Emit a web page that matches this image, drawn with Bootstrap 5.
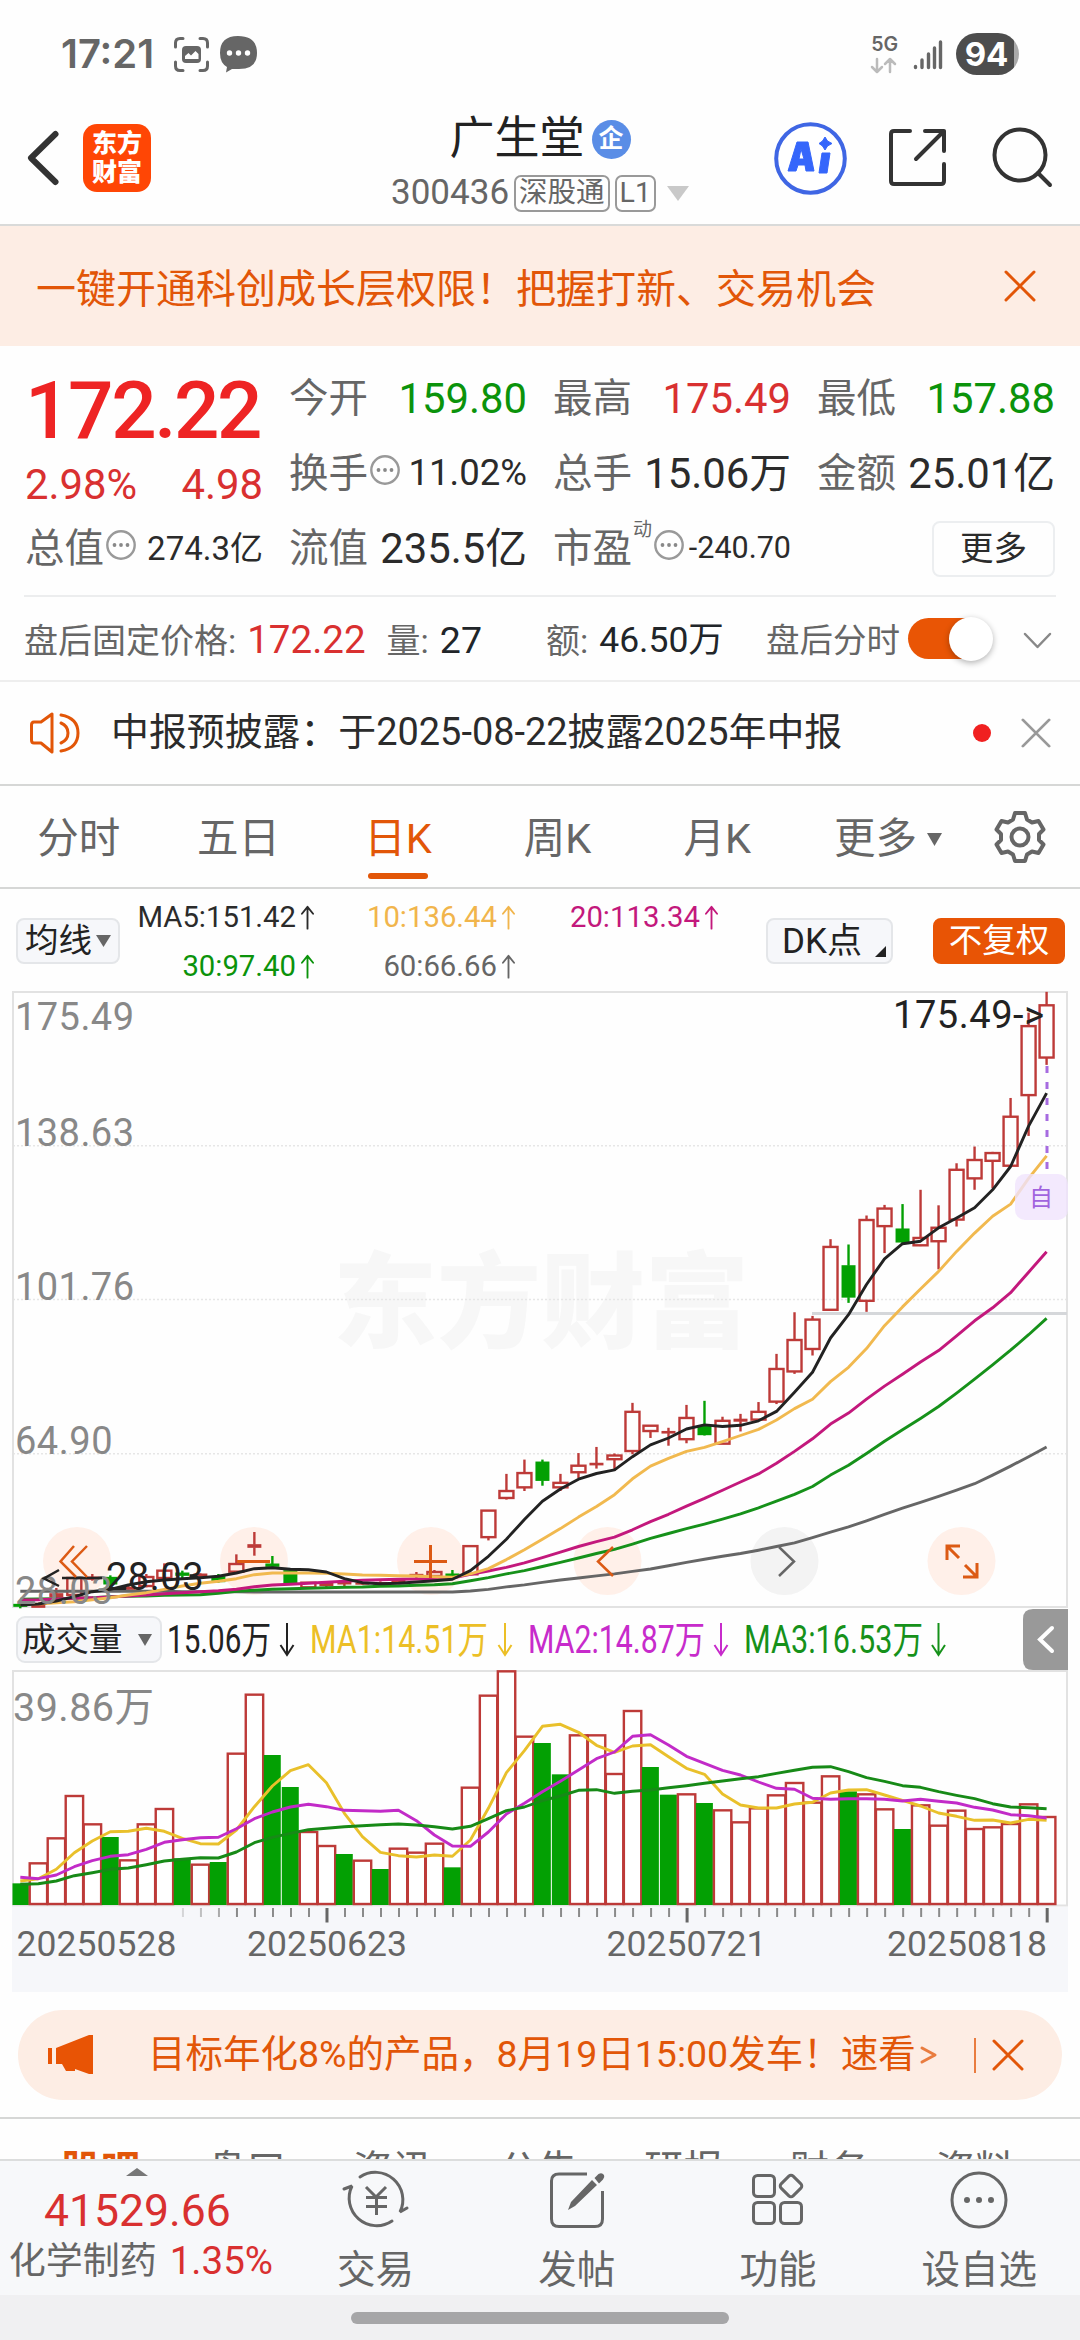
<!DOCTYPE html>
<html lang="zh-CN">
<head>
<meta charset="utf-8">
<meta name="viewport" content="width=device-width, initial-scale=1">
<title>广生堂 300436</title>
<link href="https://cdn.jsdelivr.net/npm/bootstrap@5.3.0/dist/css/bootstrap.min.css" rel="stylesheet">
<style>
:root{--or:#e25608;--rd:#d93030;--gn:#0b930b;--tx:#2b2b2b;--gy:#666;}
body{width:1080px;height:2340px;overflow:hidden;background:#fefefe;color:var(--tx);font-family:Roboto,"Noto Sans CJK SC",sans-serif;font-size:38px;line-height:1;white-space:nowrap}
svg{display:block;flex:none;overflow:visible}
.ln{fill:none;stroke:currentColor;stroke-linecap:round;stroke-linejoin:round}
.c-or{color:var(--or)}.c-rd{color:var(--rd)}.c-gn{color:var(--gn)}.c-gy{color:var(--gy)}
.status{height:108px;padding:0 61px 0 61px;color:#666;font-family:Inter,sans-serif;font-weight:600}
.status .time{font-size:40px;width:113px}
.pill{width:63px;height:42px;border-radius:21px;background:linear-gradient(90deg,#4d4d4d 58px,#aaa 58px);color:#fff;font-size:33px;font-weight:700;margin-left:14px;padding-right:2px}
.head{height:118px;border-bottom:2px solid #d9dad9;display:grid;grid-template-columns:1fr auto 1fr}
.logo{width:68px;height:68px;border-radius:14px;background:#ff4605;color:#fff;font-size:25px;font-weight:900;line-height:29px}
.name{font-size:45px;line-height:54px;color:#222;margin-top:4px}
.ent{width:39px;height:39px;border-radius:50%;background:#5a8de6;color:#fff;font-size:25px;font-weight:700;margin-left:7px}
.code{font-size:35px;line-height:38px;color:var(--gy);margin-top:8px}
.boxed{border:2px solid #999;border-radius:7px;height:37px;font-size:28.5px;padding:0 3px;line-height:31px;margin-left:5px}
.banner{height:120px;background:#fdede4;padding:7px 44px 0 36px;font-size:40px}
.stats{height:249px;padding:0 25px;display:grid;grid-template-columns:repeat(4,238px);column-gap:26px;align-content:start;padding-top:15px}
.stats .cell{height:75px;display:flex;align-items:center;justify-content:space-between}
.stats .lb{font-size:39.5px;color:var(--gy);display:flex;align-items:center}
.stats .lb svg{margin:0 0 8px 2px}
.stats .v{font-size:41.8px}.stats .s{font-size:36.5px}
.price{font-size:80px;font-weight:500;color:#ee2424;letter-spacing:-2.4px;height:100px;line-height:100px}
.more{width:123px;height:56px;border:2px solid #eceef0;border-radius:8px;font-size:33.5px}
.after{height:85px;margin:0 24px;border-top:2px solid #ecedee;font-size:34px;padding-top:4px}
.switch{width:85px;height:41px;position:relative;margin:-4px 30px 0 8px}
.switch i{position:absolute;left:0;top:0;width:80px;height:41px;border-radius:21px;background:#e95505}
.switch b{position:absolute;right:0;top:-1px;width:44px;height:44px;border-radius:50%;background:#fff;box-shadow:0 2px 6px rgba(0,0,0,.3)}
.notice{height:106px;border-top:2px solid #eee;border-bottom:2px solid #d6d7d6;font-size:37.9px;padding:0 29px 0 30px}
.ktabs{height:103px;border-bottom:2px solid #d6d7d6;font-size:41.5px;color:var(--gy)}
.ktabs>div{width:159.6px;position:relative;text-align:center;padding-top:5px;left:-1px}
.ktabs .on{color:var(--or)}
.ktabs .on:after{content:"";position:absolute;left:50%;margin-left:-30px;top:60px;width:60px;height:6px;border-radius:3px;background:var(--or)}
.marow{height:103px;padding:1px 15px 0 16px}
.chip{height:46px;border:2px solid #e4e6e9;border-radius:8px;background:#f6f7fa;font-size:33.5px;color:#222}
.mas{font-size:29.3px;display:grid;grid-template-columns:194px 201px 203px;row-gap:19px;justify-items:end;padding-top:2px}
.mas span{display:flex;align-items:center;gap:5px}
.adv{height:90px;margin:18px 18px 0;border-radius:45px;background:#fdede4;font-size:37.5px;padding:0 38px 0 30px}
.sub{height:42px;margin-top:17px;border-top:2px solid #d6d7d6;overflow:hidden;font-size:39.5px;color:var(--gy);padding:32px 30px 0 28px}
.sub div{width:145.7px;text-align:center}
.bnav{height:136px;border-top:2px solid #dcdddd;background:#f7f8fa;color:var(--gy)}
.bnav .idx{width:275px}
.bnav .it{width:201.5px;font-size:38.5px;padding-top:10px}
.bnav .it span{margin-top:22px}
.gest{height:45px;background:#f0f0f2;padding-top:17px}
.gest i{display:block;width:378px;height:12px;border-radius:6px;background:#a6a6a8;margin:auto}
</style>
<script src="https://cdn.jsdelivr.net/npm/bootstrap@5.3.0/dist/js/bootstrap.bundle.min.js"></script>
</head>
<body>
<svg width="0" height="0" class="position-absolute"><defs>
<symbol id="up" viewBox="0 0 14 26"><path class="ln" stroke-width="2" d="M7 25V2M1 9 7 1.5 13 9"/></symbol>
<symbol id="more3" viewBox="0 0 30 30"><circle cx="15" cy="15" r="13.7" fill="none" stroke="#999" stroke-width="2.4"/><g fill="#888"><circle cx="8.5" cy="15" r="1.9"/><circle cx="15" cy="15" r="1.9"/><circle cx="21.5" cy="15" r="1.9"/></g></symbol>
<symbol id="x" viewBox="0 0 32 32"><path class="ln" stroke-width="3" d="M2 2 30 30M30 2 2 30"/></symbol>
</defs></svg>

<div class="status d-flex align-items-center">
 <div class="time">17:21</div>
 <svg width="35" height="35" viewBox="0 0 35 35"><g class="ln" stroke-width="3"><path d="M1.5 10V6Q1.5 1.5 6 1.5H9M26 1.5H29Q33.5 1.5 33.5 6V10M33.5 25V29Q33.5 33.5 29 33.5H26M9 33.5H6Q1.5 33.5 1.5 29V25"/></g><rect x="8" y="9" width="19" height="17" rx="4" fill="#666"/><path d="M11 22V19L14.5 16 17 18.5 21.5 14 24.5 17V22Z" fill="#fff"/></svg>
 <svg class="ms-2 me-1" width="37" height="37" viewBox="-3 0 37 37"><path d="M18 0Q37 0 37 17 37 33 19 33H12L6 36.5 7 31Q0 27 0 17 0 0 18 0Z" fill="#666"/><g fill="#fff"><circle cx="9.5" cy="17" r="2.7"/><circle cx="18.500" cy="17" r="2.7"/><circle cx="27.5" cy="17" r="2.7"/></g></svg>
 <div class="ms-auto text-center" style="font-size:19.5px">5G
  <svg width="25" height="15" viewBox="0 0 25 15" class="mt-1" color="#bbb"><path class="ln" stroke-width="2.5" d="M6 1V13M1 9 6 14 11 9M19 14V2M14 6 19 1 24 6"/></svg></div>
 <svg class="ms-3" width="28" height="29" viewBox="0 0 28 29"><path class="ln" stroke-width="3.4" d="M1.500 26.500V27.500M8 20V27.5M14.500 14V27.5M20.500 8V27.5M26.500 2V27.500"/></svg>
 <div class="pill d-flex align-items-center justify-content-center">94</div>
</div>

<header class="head">
 <div class="d-flex align-items-center" style="padding:0 0 16px 27px">
  <svg width="32" height="54" viewBox="0 0 32 54" color="#333"><path class="ln" stroke-width="6" d="M28.5 3 4 27 28.5 51"/></svg>
  <div class="logo ms-4 d-flex flex-column align-items-center justify-content-center"><span>东方</span><span>财富</span></div>
 </div>
 <div>
  <div class="name d-flex justify-content-center align-items-center">广生堂<span class="ent d-flex align-items-center justify-content-center">企</span></div>
  <div class="code d-flex align-items-center">300436<span class="boxed">深股通</span><span class="boxed">L1</span><svg width="22" height="15" style="margin-left:11px"><path d="M0 0H22L11 15Z" fill="#c9c9c9"/></svg></div>
 </div>
 <div class="d-flex align-items-center justify-content-end" style="padding:0 28px 16px 0">
  <svg width="73" height="73" viewBox="0 0 73 73"><circle cx="36.5" cy="36.5" r="34.3" fill="#fff" stroke="#3f66e4" stroke-width="4"/><path fill="#3566fb" stroke="#3566fb" stroke-linejoin="round" fill-rule="evenodd" d="M23 20H34L40 49H32L31 43H24L22 49H14ZM27 27 25 37H30ZM48 31H56L53 51H45ZM51 15 53.500 19 58 21.5 53.500 24 51 28 48.500 24 45 21.5 48.500 19Z"/></svg>
  <svg width="58" height="58" viewBox="0 0 58 58" style="margin-left:42px" color="#333"><path class="ln" stroke-width="4" d="M21 2H5Q2 2 2 5V52Q2 55 5 55H52Q55 55 55 52V35M36 2H55V22M55 2 27 30"/></svg>
  <svg width="60" height="60" viewBox="0 0 60 60" style="margin-left:45px" color="#333"><g class="ln" stroke-width="4"><circle cx="28" cy="27" r="25.5"/><path d="M46 45 58 57"/></g></svg>
 </div>
</header>

<div class="banner c-or d-flex align-items-center justify-content-between"><span>一键开通科创成长层权限！把握打新、交易机会</span><svg width="32" height="32" style="margin-top:-8px"><use href="#x"/></svg></div>

<section class="stats">
 <div style="grid-row:span 2"><div class="price">172.22</div><div class="d-flex justify-content-between c-rd v" style="margin-top:3px"><span>2.98%</span><span>4.98</span></div></div>
 <div class="cell"><span class="lb">今开</span><span class="v c-gn">159.80</span></div>
 <div class="cell"><span class="lb">最高</span><span class="v c-rd">175.49</span></div>
 <div class="cell"><span class="lb">最低</span><span class="v c-gn">157.88</span></div>
 <div class="cell"><span class="lb">换手<svg width="30" height="30"><use href="#more3"/></svg></span><span class="s">11.02%</span></div>
 <div class="cell"><span class="lb">总手</span><span class="v">15.06万</span></div>
 <div class="cell"><span class="lb">金额</span><span class="v">25.01亿</span></div>
 <div class="cell"><span class="lb">总值<svg width="30" height="30"><use href="#more3"/></svg></span><span class="s" style="font-size:33px">274.3亿</span></div>
 <div class="cell"><span class="lb">流值</span><span class="v">235.5亿</span></div>
 <div class="cell"><span class="lb">市盈<small style="font-size:19px;margin:-38px 0 0 1px">动</small><svg width="30" height="30"><use href="#more3"/></svg></span><span class="s" style="font-size:30.5px">-240.70</span></div>
 <div class="cell justify-content-end"><span class="more d-flex align-items-center justify-content-center">更多</span></div>
</section>

<div class="after d-flex align-items-center c-gy">
 <span>盘后固定价格:</span><span class="c-rd" style="font-size:38.5px;margin-left:11px">172.22</span>
 <span style="margin-left:21px">量:</span><span class="text-dark" style="font-size:37.5px;margin-left:11px">27</span>
 <span style="margin-left:64px">额:</span><span class="text-dark" style="font-size:35.5px;margin-left:11px">46.50万</span>
 <span class="ms-auto" style="font-size:33.5px">盘后分时</span>
 <span class="switch"><i></i><b></b></span>
 <svg width="29" height="16" class="me-1" color="#888"><path class="ln" stroke-width="2.5" d="M2 1 14.5 14 27 1"/></svg>
</div>

<div class="notice d-flex align-items-center">
 <svg width="50" height="42" viewBox="0 0 50 42" class="c-or"><path class="ln" stroke-width="3" d="M22 2V40L11 31H4Q1.5 31 1.5 28V13Q1.5 10 4 10H11ZM31 11Q38 14 38 21 38 28 31 31M31 3Q48 6 48 21 48 36 31 39"/></svg>
 <span style="margin-left:31px">中报预披露：于2025-08-22披露2025年中报</span>
 <svg width="18" height="18" class="ms-auto"><circle cx="9" cy="9" r="9" fill="#f02020"/></svg>
 <svg width="30" height="30" style="margin-left:30px" color="#999"><use href="#x"/></svg>
</div>

<nav class="ktabs d-flex align-items-center">
 <div>分时</div><div>五日</div><div class="on">日K</div><div>周K</div><div>月K</div>
 <div class="d-flex align-items-center justify-content-center" style="width:182px">更多<svg width="15" height="13" style="margin-left:10px"><path d="M0 0H15L7.5 13Z" fill="#666"/></svg></div>
 <svg width="52" height="52" viewBox="-26 -26 52 52" style="margin-left:14px"><g class="ln" stroke-width="4"><path d="M-5 -24H5L7 -17.5 12 -14.5 18.5 -16 23.5 -7.5 19 -3V3L23.5 7.5 18.5 16 12 14.5 7 17.5 5 24H-5L-7 17.5-12 14.5-18.5 16-23.5 7.5-19 3V-3L-23.5-7.5-18.5-16-12-14.5-7-17.5Z"/><circle r="8.5"/></g></svg>
</nav>

<div class="marow d-flex align-items-center">
 <span class="chip d-flex align-items-center justify-content-center" style="width:104px">均线<svg width="15" height="12" class="ms-1"><path d="M0 0H15L7.5 12Z" fill="#666"/></svg></span>
 <div class="mas">
  <span>MA5:151.42<svg width="13" height="25"><use href="#up"/></svg></span>
  <span style="color:#f1b54c">10:136.44<svg width="13" height="25"><use href="#up"/></svg></span>
  <span style="color:#c3187c">20:113.34<svg width="13" height="25"><use href="#up"/></svg></span>
  <span class="c-gn">30:97.40<svg width="13" height="25"><use href="#up"/></svg></span>
  <span class="c-gy">60:66.66<svg width="13" height="25"><use href="#up"/></svg></span>
 </div>
 <span class="chip d-flex align-items-center" style="width:127px;margin-left:48px;padding-left:14px;font-size:35px">DK点<svg width="11" height="11" style="margin:20px 0 0 13px"><path d="M11 0V11H0Z" fill="#222"/></svg></span>
 <span class="chip d-flex align-items-center justify-content-center text-white ms-auto" style="width:132px;background:#e85405;border-color:#e85405">不复权</span>
</div>

<svg id="chart" width="1080" height="1000" viewBox="0 992 1080 1000" font-family="Roboto,'Noto Sans CJK SC',sans-serif"></svg>

<div class="adv c-or d-flex align-items-center">
 <svg width="46" height="40" viewBox="0 0 46 40"><path fill="#e85405" d="M0 13H4V29H0ZM8 13 41 0H45V39H41L27 34V36H18L14 29H8Z"/></svg>
 <span style="margin-left:54px">目标年化8%的产品，8月19日15:00发车！速看</span>
 <svg width="17" height="20" style="margin-left:4px" opacity=".75"><path class="ln" stroke-width="3" d="M2 3 15 10 2 17"/></svg>
 <svg width="2" height="35" class="ms-auto"><path d="M1 0V35" stroke="#e25608" stroke-width="1.5"/></svg>
 <svg width="32" height="32" style="margin-left:16px"><use href="#x"/></svg>
</div>

<div class="sub d-flex"><div class="c-or fw-semibold">股吧</div><div>盘口</div><div>资讯</div><div>公告</div><div>研报</div><div>财务</div><div>资料</div></div>

<nav class="bnav d-flex">
 <div class="idx d-flex flex-column align-items-center">
  <svg width="22" height="8" style="margin-top:7px"><path d="M0 8 11 0 22 8Z" fill="#777"/></svg>
  <div class="c-rd" style="font-size:44.500px;margin-top:13px">41529.66</div>
  <div style="font-size:37px;margin-top:8px;margin-left:7px">化学制药<span class="c-rd" style="font-size:38.5px;margin-left:13px">1.35%</span></div>
 </div>
 <div class="it d-flex flex-column align-items-center">
  <svg width="66" height="58" viewBox="0 0 66 58"><g class="ln" stroke-width="3"><path d="M18 6A27.5 27.5 0 0 1 58 41L65 37M50 50A27.5 27.5 0 0 1 10 15L2 18" stroke-linejoin="bevel"/><path stroke-linecap="butt" d="M24 16 34 26 44 16M24 26.5H45M24 35.5H45M34.5 26V44"/></g></svg>
  <span>交易</span></div>
 <div class="it d-flex flex-column align-items-center">
  <svg width="54" height="58" viewBox="0 0 54 58"><path class="ln" stroke-width="3" d="M37 3H9Q1.500 3 1.500 10V48Q1.500 55.500 9 55.500H45Q52.500 55.500 52.500 48V20" style="stroke-linecap:butt"/><path fill="#666" d="M42 9 47 14 25 35 18 39 21 31ZM44.500 7 48.500 3Q52 1 54 4 55 6 53 8.500L49 12.500Z"/></svg>
  <span>发帖</span></div>
 <div class="it d-flex flex-column align-items-center">
  <svg width="52" height="58" viewBox="0 0 52 58"><g class="ln" stroke-width="3"><rect x="1.5" y="4.5" width="21" height="21" rx="4"/><rect x="1.5" y="31.5" width="21" height="21" rx="4"/><rect x="28.5" y="31.5" width="21" height="21" rx="4"/><rect x="30.5" y="6.500" width="17" height="17" rx="3" transform="rotate(45 39 15)"/></g></svg>
  <span>功能</span></div>
 <div class="it d-flex flex-column align-items-center">
  <svg width="58" height="58" viewBox="0 0 58 58"><circle class="ln" stroke-width="3" cx="29" cy="29" r="27"/><g fill="#666"><circle cx="17" cy="29" r="3"/><circle cx="29" cy="29" r="3"/><circle cx="41" cy="29" r="3"/></g></svg>
  <span>设自选</span></div>
</nav>
<div class="gest"><i></i></div>

<script>
const X = i => 20.3 + 18.005 * i, PY = v => 980 + v / 2.45, VY = v => 1590 + v / 3;
const low = a => a.map(v => 1274 + v * 0.8167);
const RED = '#bd3a38', GREEN = '#03a003';
let s = '';
const line = (x1,y1,x2,y2,c,w,e='') => s += `<line x1="${x1}" y1="${y1}" x2="${x2}" y2="${y2}" stroke="${c}" stroke-width="${w}" ${e}/>`;
const rect = (x,y,w,h,e) => s += `<rect x="${x}" y="${y}" width="${w}" height="${h}" ${e}/>`;
const text = (x,y,t,size,c,e='') => s += `<text x="${x}" y="${y}" font-size="${size}" fill="${c}" ${e}>${t}</text>`;
const path = (d,c,w=3,e='') => s += `<path d="${d}" fill="none" stroke="${c}" stroke-width="${w}" ${e}/>`;
const poly = (a,f,c,w=2.9) => s += `<polyline fill="none" stroke="${c}" stroke-width="${w}" stroke-linejoin="round" points="${a.map((v,i)=>X(i).toFixed(1)+','+f(v).toFixed(1)).join(' ')}"/>`;

// price panel frame, grid and watermark
text(333,1340,'东方财富',104,'#f7f7f7','font-weight="900" textLength="416"');
[1145.7,1299.6,1453.8].forEach(y => line(13,y,1067,y,'#e6e6e6',1.5,'stroke-dasharray="2 2"'));
rect(13,992,1054,615,'fill="none" stroke="#e2e2e2" stroke-width="2"');
[[77,0],[254,0],[431,0],[607.5,0],[784.5,1],[961.5,0]].forEach(([x,g]) => s += `<circle cx="${x}" cy="1561" r="34" fill="${g?'#f3f3f3':'#fff0e9'}"/>`);
line(812,1313.5,1067,1313.5,'#d5d7da',3);

// candles: [high, top, bottom, low]
const K0 = [[310,313,319,325],[313,315,322,322],[264,281,290,295],[232,234,285,290],[222,231,238,242],[226,232,252,264],[255,262,268,270],[222,231,258,262],[190,212,234,238],[212,219,226,234],[220,222,228,230],[222,230,245,248],[163,192,215,220],[96,134,142,167],[168,192,199,202],[210,212,248,250],[246,248,262,262],[243,247,257,261],[240,247,252,259],[246,249,252,254],[244,248,252,254],[240,241,250,252],[216,223,229,234],[210,216,228,234],[210,222,230,236]];
const K1 = [[1387,1387,1456,1456],[1300,1300,1365,1373],[1210,1252,1269,1273],[1175,1208,1243,1252],[1175,1181,1226,1239],[1210,1232,1243,1252],[1159,1190,1206,1220],[1144,1184,1188,1197],[1160,1165,1174,1203],[1036,1058,1154,1162],[1092,1092,1105,1122],[1097,1106,1110,1141],[1041,1073,1125,1135],[1031,1094,1114,1116],[1070,1080,1136,1136],[1063,1076,1081,1106],[1034,1058,1077,1080],[916,953,1033,1039],[814,882,959,965],[823,832,904,920],[635,654,808,811],[648,700,777,791],[577,588,786,813],[551,560,603,669],[549,610,642,645],[514,632,650,652],[552,607,640,709],[449,465,587,604],[408,441,486,514],[421,424,443,510],[289,335,455,455],[80,113,282,382],[29,62,190,208]];
const kDown = [0,5,9,11,14,15,24,29,38,46,49];
K0.map(low).concat(K1).forEach((k,i) => {
  const [h,t,b,l] = k.map(PY), dn = kDown.includes(i), c = dn ? GREEN : RED, x = X(i);
  line(x,h,x,t,c,2.4); line(x,b,x,l,c,2.4);
  if (dn || b-t < 3.5) rect(x-7,t-.5,14,Math.max(b-t+1,2.2),`fill="${c}"`);
  else rect(x-7,t,14,b-t,`fill="none" stroke="${c}" stroke-width="2.4"`);
});

// moving averages
poly(low([274,274,274,274,274,274,274,274,274,275,275,275,275,276,276,276,276,276,276,276,276,276,276,276,276]).concat([1497,1493,1487,1482,1476,1470,1465,1460,1455,1449,1443,1435,1427,1419,1412,1405,1397,1388,1379,1366,1353,1340,1325,1309,1294,1280,1265,1250,1234,1213,1191,1168,1144]),PY,'#666');
poly(low([298,297,296,295,293,290,289,288,286,285,284,280,274,271,268,266,265,263,262,261,259,258,256,254,251]).concat([1472,1464,1455,1447,1437,1427,1416,1405,1395,1382,1368,1356,1344,1333,1321,1308,1293,1277,1260,1241,1213,1189,1160,1130,1102,1074,1045,1012,978,943,907,869,829]),PY,'#16911a');
poly(low([300,299,297,295,293,291,288,285,281,278,275,272,268,260,255,253,250,247,244,241,239,238,237,237,234]).concat([1456,1448,1439,1428,1415,1402,1388,1376,1365,1347,1327,1309,1289,1270,1250,1230,1210,1184,1155,1124,1088,1061,1027,995,966,936,908,872,835,803,766,716,666]),PY,'#c3187c');
poly(low([313,312,308,305,299,293,285,278,268,258,250,244,236,224,219,219,219,220,222,225,226,227,228,230,232]).concat([1455,1442,1420,1396,1370,1344,1316,1290,1261,1222,1191,1172,1155,1145,1131,1116,1101,1078,1050,1027,984,949,903,847,801,757,714,665,620,579,549,486,431]),PY,'#f1b94f');
poly(low([315,312,303,290,275,268,255,245,240,236,233,229,219,206,203,208,209,216,236,248,251,250,246,242,238]).concat([1447,1412,1370,1322,1277,1247,1223,1209,1200,1168,1139,1122,1100,1090,1094,1091,1080,1057,1010,961,877,820,746,683,646,640,607,583,558,514,457,358,277]),PY,'#222');

// axis labels and marks
[['175.49',1030,119],['138.63',1146,119],['101.76',1300,119],['64.90',1454,97.5],['28.03',1604,97.5]].forEach(([t,y,w]) => text(15,y,t,38,'#888',`textLength="${w}"`));
text(893,1028,'175.49-&gt;',38,'#222','textLength="151"');
path('M59 1570 44 1578.5 59 1586','#222',2.5); line(62,1578,102,1578,'#222',2.5); text(106,1590,'28.03',38,'#222','textLength="97.5"');
line(1047,1066,1047,1170,'#a66be0',3,'stroke-dasharray="7 9"');
rect(1015,1174,53,46,'rx="10" fill="#f0e4fd" fill-opacity=".8"');
text(1041,1206,'自',24,'#a164de','text-anchor="middle"');

// floating chart controls
const O = '#dc5a14';
path('M74 1546 60.5 1561.5 76 1577M87 1546 72 1561.5 87 1577',O,2.5);
path('M237 1561.5H270',O); path('M414 1561.5H447M430.5 1545V1578',O);
path('M613 1547 598 1561.5 613 1576',O,2.5); path('M779 1547 794 1561.5 779 1576','#666',2.5);
path('M947 1560V1546H960M947 1546 959 1558M977 1563V1577H963M977 1577 965 1565',O,3);

// volume legend
rect(17,1617,144,45,'rx="8" fill="#f6f7fa" stroke="#e4e6e9" stroke-width="2"');
text(22,1651,'成交量',33.5,'#222'); s += '<path d="M138 1634H152L145 1646Z" fill="#666"/>';
[['15.06万',167,104,'#222',287],['MA1:14.51万',310,178,'#ecbf26',505],['MA2:14.87万',528,177,'#c72bcb',721],['MA3:16.53万',744,179,'#16911a',938.5]].forEach(([t,x,w,c,ax]) => {
  text(x,1652.5,t,38,c,`textLength="${w}" lengthAdjust="spacingAndGlyphs"`);
  path(`M${ax} 1623V1654M${ax-6.5} 1645 ${ax} 1655 ${ax+6.5} 1645`,c,2);
});
s += '<path d="M1068 1609H1033Q1023 1609 1023 1619V1660Q1023 1670 1033 1670H1068Z" fill="#999"/>';
path('M1052 1628 1040 1639.5 1052 1651','#fff',4,'stroke-linecap="round"');

// volume panel
rect(13,1671,1054,234.5,'fill="none" stroke="#e2e2e2" stroke-width="2"');
const V = [880,820,745,618,703,741,811,703,657,805,824,816,491,314,495,591,726,768,792,812,837,776,788,761,832,593,317,244,440,459,553,436,436,552,363,531,614,613,639,661,697,655,616,579,638,559,604,613,658,717,646,707,662,717,712,702,643,681];
const vDown = [0,5,9,11,14,15,18,20,24,29,30,35,36,38,46,49];
V.forEach((v,i) => {
  const y = VY(v), x = X(i);
  if (vDown.includes(i)) rect(x-(i?8.6:7.8),y,i?17:16.4,1905-y,`fill="${GREEN}"`);
  else rect(x-8.6,y,17.4,1904-y,`fill="#fff" stroke="${RED}" stroke-width="2.4"`);
});
text(13,1721,'39.86万',39.5,'#888','textLength="141"');
poly([873,866,838,788,753,725,724,715,724,745,761,762,720,650,588,542,524,578,670,740,787,797,801,795,799,750,655,548,482,409,403,427,466,487,468,464,500,535,553,612,645,654,654,642,637,609,600,599,615,631,648,669,679,691,690,699,688,691],VY,'#e9c02b');
poly([862,866,855,830,812,799,794,778,757,749,743,742,716,686,666,651,643,650,661,662,664,661,692,735,768,769,726,672,640,605,574,540,506,486,439,434,465,499,520,541,555,576,595,598,625,628,626,626,628,633,628,634,639,652,660,674,677,684],VY,'#c22bc8');
poly([883,881,873,857,848,838,834,824,813,808,803,804,786,758,742,730,719,715,710,707,704,702,705,710,717,709,686,662,651,632,618,601,599,610,604,600,593,587,580,573,566,560,550,541,532,530,545,563,574,587,592,605,616,626,641,651,653,656],VY,'#178a17');

// time axis
rect(12,1907,1056,85,'fill="#f6f7fa"');
for (let i = 9; i < 58; i++) {
  const big = [17,37,57].includes(i), x = X(i) + .6;
  line(x,1908,x,big?1922.5:1917,big?'#666':'#8a8a8a',big?3:2,`opacity="${i<12?.3+.2*(i-9):1}"`);
}
[['20250528',16.5],['20250623',247],['20250721',606.5],['20250818',887]].forEach(([t,x]) => text(x,1956,t,35.5,'#666','textLength="160"'));
document.getElementById('chart').innerHTML = s;
</script>
</body>
</html>
